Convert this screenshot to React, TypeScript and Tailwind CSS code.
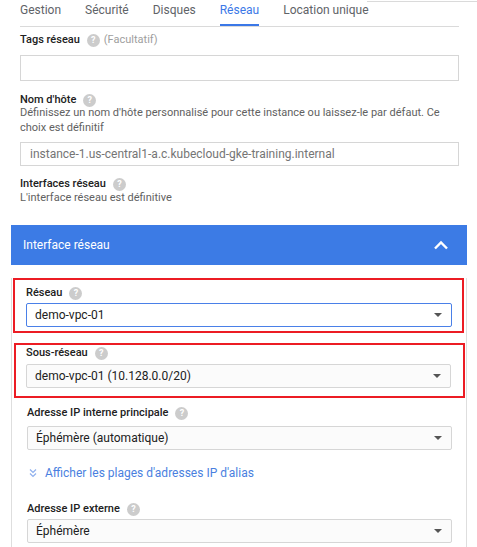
const font = { fontFamily: "Roboto, 'Liberation Sans', sans-serif" };

function Help() {
  return (
    <span className="inline-flex h-[13px] w-[13px] items-center justify-center rounded-full bg-[#cccccc] text-[9px] font-bold leading-none text-white">
      ?
    </span>
  );
}

function Label({ text, extra }: { text: string; extra?: string }) {
  return (
    <div className="flex h-[14px] items-center gap-[7px] text-[11px] leading-[14px]">
      <span className="font-medium text-[#212121]">{text}</span>
      <Help />
      {extra && <span className="-ml-[3px] text-[#9e9e9e]">{extra}</span>}
    </div>
  );
}

function Select({ value, active }: { value: string; active?: boolean }) {
  return (
    <div
      className={
        active
          ? "flex h-[24px] items-center justify-between rounded-[2px] border border-[#4a80e8] bg-white pl-[8px] pr-[9px] text-[12px] text-[#212121]"
          : "flex h-[24px] items-center justify-between rounded-[2px] border border-[#d6d6d6] bg-[#fbfbfb] pl-[8px] pr-[9px] text-[12px] text-[#212121]"
      }
    >
      <span>{value}</span>
      <svg width="8" height="4" viewBox="0 0 8 4">
        <path d="M0 0h8L4 4z" fill="#555" />
      </svg>
    </div>
  );
}

export default function App() {
  const tabs = ["Gestion", "Sécurité", "Disques", "Réseau", "Location unique"];

  return (
    <div className="min-h-[547px] w-[477px] overflow-hidden bg-white" style={font}>

      {/* TOP EDGE */}
      <div className="flex justify-end pt-px">
        <div className="h-px w-[110px] bg-[#dadada]" />
      </div>

      <div className="pl-[20px] pr-[18px]">

        {/* TABS */}
        <div className="-mt-[2px] flex h-[27px] gap-[24px] border-b border-[#dadada] text-[12px]">
          {tabs.map((tab) => (
            <div
              key={tab}
              className={
                tab === "Réseau"
                  ? "h-[26px] border-b-2 border-[#3b78e7] pt-[2px] leading-[16px] text-[#3b78e7]"
                  : "h-[26px] pt-[2px] leading-[16px] text-[#5f6368]"
              }
            >
              {tab}
            </div>
          ))}
        </div>

        {/* TAGS */}
        <div className="mt-[6px]">
          <Label text="Tags réseau" extra="(Facultatif)" />
        </div>
        <div className="mt-[8px] h-[26px] border border-[#d6d6d6]" />

        {/* HOSTNAME */}
        <div className="mt-[12px]">
          <Label text="Nom d'hôte" />
        </div>
        <p className="-mt-[2px] text-[11px] leading-[15px] text-[#616161]">
          Définissez un nom d'hôte personnalisé pour cette instance ou laissez-le par défaut. Ce choix est définitif
        </p>
        <div className="mt-[7px] flex h-[24px] items-center border border-[#d6d6d6] pl-[9px] text-[12px] text-[#757575]">
          instance-1.us-central1-a.c.kubecloud-gke-training.internal
        </div>

        {/* INTERFACES */}
        <div className="mt-[11px]">
          <Label text="Interfaces réseau" />
        </div>
        <p className="-mt-px text-[11px] leading-[15px] text-[#616161]">
          L'interface réseau est définitive
        </p>
      </div>

      {/* CARD */}
      <div className="ml-[11px] mr-[10px] mt-[20px]">

        <div className="flex h-[40px] items-center justify-between bg-[#3c7be5] pl-[12px] pr-[18px]">
          <span className="text-[12px] text-white">Interface réseau</span>
          <svg width="16" height="10" viewBox="0 0 16 10">
            <path d="M2 8.5l6-6 6 6" fill="none" stroke="white" strokeWidth="2.4" />
          </svg>
        </div>

        <div className="border-x border-[#dedede] pb-[20px] pl-px pr-[1px]">

          {/* RESEAU */}
          <div className="mr-[1px] mt-[13px] border-2 border-[#ec1c24] pb-[4px] pl-[11px] pr-[10px] pt-[6px]">
            <Label text="Réseau" />
            <div className="mt-[3px]">
              <Select value="demo-vpc-01" active />
            </div>
          </div>

          {/* SOUS-RESEAU */}
          <div className="ml-[1px] mt-[10px] border-2 border-[#ec1c24] pb-[8px] pl-[10px] pr-[12px] pt-[1px]">
            <Label text="Sous-réseau" />
            <div className="mt-[4px]">
              <Select value="demo-vpc-01 (10.128.0.0/20)" />
            </div>
          </div>

          <div className="pl-[14px] pr-[13px]">

            {/* IP INTERNE */}
            <div className="mt-[8px]">
              <Label text="Adresse IP interne principale" />
            </div>
            <div className="mt-[6px]">
              <Select value="Éphémère (automatique)" />
            </div>

            {/* ALIAS */}
            <div className="mt-[15px] flex items-center gap-[8px] pl-[2px] text-[12px] leading-[16px] text-[#4a7fe0]">
              <svg width="8" height="10" viewBox="0 0 8 10">
                <path d="M1 1.5l3 3 3-3M1 5.5l3 3 3-3" fill="none" stroke="#8fb0ee" strokeWidth="1.2" />
              </svg>
              <span>Afficher les plages d'adresses IP d'alias</span>
            </div>

            {/* IP EXTERNE */}
            <div className="mt-[21px]">
              <Label text="Adresse IP externe" />
            </div>
            <div className="mt-[3px]">
              <Select value="Éphémère" />
            </div>
          </div>
        </div>
      </div>
    </div>
  );
}
